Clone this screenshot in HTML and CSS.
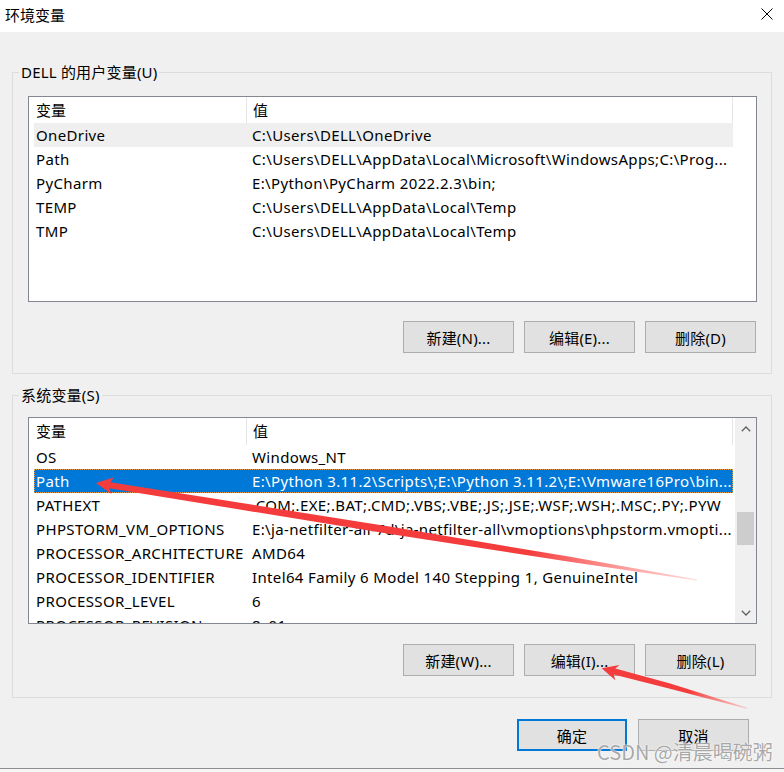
FILE: index.html
```html
<!DOCTYPE html>
<html lang="zh-CN">
<head>
<meta charset="utf-8">
<title>环境变量</title>
<link rel="stylesheet" href="styles.css">
</head>
<body>
<div class="window">
  <div class="titlebar">
    <span class="title">环境变量</span>
    <svg class="close" width="12" height="12" viewBox="0 0 12 12"><path d="M0.5 0.5 L11.5 11.5 M11.5 0.5 L0.5 11.5" stroke="#000" stroke-width="1" fill="none"/></svg>
  </div>
  <div class="content">
    <div class="group group-user">
      <div class="legend">DELL 的用户变量(U)</div>
      <div class="list list-user">
        <div class="list-main">
          <div class="list-head"><div class="hcell hname">变量</div><div class="hcell hval">值</div></div>
          <div class="row inactive"><span class="c-name">OneDrive</span><span class="c-val">C:\Users\DELL\OneDrive</span></div>
          <div class="row"><span class="c-name">Path</span><span class="c-val">C:\Users\DELL\AppData\Local\Microsoft\WindowsApps;C:\Prog...</span></div>
          <div class="row"><span class="c-name">PyCharm</span><span class="c-val">E:\Python\PyCharm 2022.2.3\bin;</span></div>
          <div class="row"><span class="c-name">TEMP</span><span class="c-val">C:\Users\DELL\AppData\Local\Temp</span></div>
          <div class="row"><span class="c-name">TMP</span><span class="c-val">C:\Users\DELL\AppData\Local\Temp</span></div>
        </div>
      </div>
      <div class="buttons">
        <button class="btn">新建(N)...</button>
        <button class="btn">编辑(E)...</button>
        <button class="btn">删除(D)</button>
      </div>
    </div>
    <div class="group group-sys">
      <div class="legend">系统变量(S)</div>
      <div class="list list-sys">
        <div class="list-main">
          <div class="list-head"><div class="hcell hname">变量</div><div class="hcell hval">值</div></div>
          <div class="row"><span class="c-name">OS</span><span class="c-val">Windows_NT</span></div>
          <div class="row selected"><span class="c-name">Path</span><span class="c-val">E:\Python 3.11.2\Scripts\;E:\Python 3.11.2\;E:\Vmware16Pro\bin...</span></div>
          <div class="row"><span class="c-name">PATHEXT</span><span class="c-val">.COM;.EXE;.BAT;.CMD;.VBS;.VBE;.JS;.JSE;.WSF;.WSH;.MSC;.PY;.PYW</span></div>
          <div class="row"><span class="c-name">PHPSTORM_VM_OPTIONS</span><span class="c-val">E:\ja-netfilter-all-7d\ja-netfilter-all\vmoptions\phpstorm.vmopti...</span></div>
          <div class="row"><span class="c-name">PROCESSOR_ARCHITECTURE</span><span class="c-val">AMD64</span></div>
          <div class="row"><span class="c-name">PROCESSOR_IDENTIFIER</span><span class="c-val">Intel64 Family 6 Model 140 Stepping 1, GenuineIntel</span></div>
          <div class="row"><span class="c-name">PROCESSOR_LEVEL</span><span class="c-val">6</span></div>
          <div class="row"><span class="c-name">PROCESSOR_REVISION</span><span class="c-val">8c01</span></div>
        </div>
        <div class="scrollbar">
          <div class="sb-btn"><svg width="10" height="6" viewBox="0 0 10 6"><path d="M0.8 5.2 L5 1 L9.2 5.2" stroke="#606060" stroke-width="1.3" fill="none"/></svg></div>
          <div class="sb-track"><div class="sb-thumb"></div></div>
          <div class="sb-btn"><svg width="10" height="6" viewBox="0 0 10 6"><path d="M0.8 0.8 L5 5 L9.2 0.8" stroke="#606060" stroke-width="1.3" fill="none"/></svg></div>
        </div>
      </div>
      <div class="buttons">
        <button class="btn">新建(W)...</button>
        <button class="btn">编辑(I)...</button>
        <button class="btn">删除(L)</button>
      </div>
    </div>
    <div class="footer">
      <button class="btn btn-ok">确定</button>
      <button class="btn btn-cancel">取消</button>
    </div>
  </div>
</div>
<div class="taskbar"></div>
<svg class="annot" width="784" height="772" viewBox="0 0 784 772">
  <defs>
    <linearGradient id="g1" gradientUnits="userSpaceOnUse" x1="96" y1="483" x2="697" y2="580">
      <stop offset="0" stop-color="#f43c3c"/>
      <stop offset="0.72" stop-color="#f43c3c"/>
      <stop offset="1" stop-color="#ff6b6b" stop-opacity="0.25"/>
    </linearGradient>
    <linearGradient id="g2" gradientUnits="userSpaceOnUse" x1="602" y1="668" x2="747" y2="708">
      <stop offset="0" stop-color="#f43c3c"/>
      <stop offset="0.6" stop-color="#f43c3c"/>
      <stop offset="1" stop-color="#ff6b6b" stop-opacity="0.3"/>
    </linearGradient>
  </defs>
  <polygon fill="url(#g1)" points="96,483 111.4,494.1 109.3,488.2 391.6,534.3 569.4,561.8 696.9,580.5 697.1,579.5 570.2,556.8 392.6,527.1 110.3,482.2 114.1,477.3"/>
  <polygon fill="url(#g2)" points="601.7,668.3 615.3,680.3 613.7,674.4 669.0,688.4 746.9,708.8 747.1,707.8 670.2,683.6 615.3,668.6 619.5,664.9"/>
</svg>
<div class="watermark">CSDN @清晨喝碗粥</div>
</body>
</html>
```
FILE: styles.css
```css
html, body {
  margin: 0;
  padding: 0;
}
body {
  width: 784px;
  height: 772px;
  overflow: hidden;
  position: relative;
  background: #f0f0f0;
  font-family: "Noto Sans", "Noto Sans CJK SC", sans-serif;
  font-size: 15px;
  color: #000;
}
.window {
  height: 768px;
  background: #f0f0f0;
  border-bottom: 1px solid #8e8e8e;
  display: flex;
  flex-direction: column;
}
.titlebar {
  height: 32px;
  background: #fff;
  display: flex;
  justify-content: space-between;
  align-items: flex-start;
  flex: none;
}
.title {
  padding-left: 5px;
  line-height: 29px;
  font-family: "Noto Sans CJK SC", sans-serif;
}
.close {
  margin-top: 8px;
  margin-right: 11px;
}
.content {
  display: flex;
  flex-direction: column;
}
.group {
  border: 1px solid #dcdcdc;
  margin: 0 12px 0 12px;
  padding: 0 14px 20px 15px;
}
.group-user {
  margin-top: 40px;
}
.group-sys {
  margin-top: 21px;
  padding-bottom: 21px;
}
.legend {
  width: fit-content;
  height: 20px;
  line-height: 20px;
  margin: -11px 0 14px -9px;
  padding: 0 2px;
  background: #f0f0f0;
  letter-spacing: 0.2px;
}
.group-sys .legend {
  margin-bottom: 12px;
}
.list {
  box-sizing: border-box;
  height: 206px;
  border: 1px solid #828790;
  background: #fff;
  display: flex;
  overflow: hidden;
}
.list-sys {
  height: 207px;
}
.list-main {
  width: 704px;
  flex: none;
  overflow: hidden;
}
.list-head {
  display: flex;
  height: 26px;
}
.list-sys .list-head {
  height: 27px;
}
.hcell {
  box-sizing: border-box;
  border-right: 1px solid #e5e5e5;
  line-height: 26px;
  white-space: nowrap;
}
.hname {
  width: 218px;
  padding-left: 7px;
}
.hval {
  flex: 1;
  padding-left: 6px;
}
.row {
  display: flex;
  height: 24px;
  line-height: 24px;
  margin-left: 5px;
  width: 699px;
  box-sizing: border-box;
  white-space: nowrap;
  letter-spacing: 0.36px;
}
.row.inactive {
  background: #efefef;
}
.row.selected {
  background: #0078d7;
  color: #fff;
  outline: 1px dotted #e59a4a;
  outline-offset: -1px;
}
.c-name {
  width: 216px;
  flex: none;
  padding-left: 2px;
  box-sizing: border-box;
  overflow: hidden;
}
.c-val {
  flex: 1;
  padding-left: 2px;
  overflow: hidden;
}
.scrollbar {
  width: 21px;
  margin-left: 2px;
  flex: none;
  background: #f0f0f0;
  display: flex;
  flex-direction: column;
}
.sb-btn {
  height: 21px;
  display: flex;
  align-items: center;
  justify-content: center;
  flex: none;
}
.sb-track {
  flex: 1;
}
.sb-thumb {
  margin: 73px auto 0 auto;
  width: 17px;
  height: 33px;
  background: #cdcdcd;
}
.buttons {
  display: flex;
  justify-content: flex-end;
  gap: 10px;
  margin-top: 19px;
  padding-right: 1px;
}
.group-sys .buttons {
  margin-top: 20px;
}
.btn {
  width: 111px;
  height: 32px;
  box-sizing: border-box;
  border: 1px solid #adadad;
  background: #e1e1e1;
  font-family: "Noto Sans", "Noto Sans CJK SC", sans-serif;
  font-size: 15px;
  letter-spacing: 0.2px;
  color: #000;
  padding: 0;
  margin: 0;
}
.footer {
  display: flex;
  justify-content: flex-end;
  gap: 11px;
  margin-top: 21px;
  padding-right: 35px;
}
.btn-ok {
  width: 110px;
  border: 2px solid #0078d7;
}
.taskbar {
  height: 3px;
  background: #f6f6f6;
}
.annot {
  position: absolute;
  left: 0;
  top: 0;
  pointer-events: none;
}
.watermark {
  position: absolute;
  left: 597px;
  top: 739px;
  font-family: "Noto Sans CJK SC", sans-serif;
  font-size: 20px;
  line-height: 26px;
  color: rgba(110, 110, 110, 0.6);
  text-shadow: 0 0 1px #fff, 0 0 2px #fff;
  white-space: nowrap;
  pointer-events: none;
}
```
